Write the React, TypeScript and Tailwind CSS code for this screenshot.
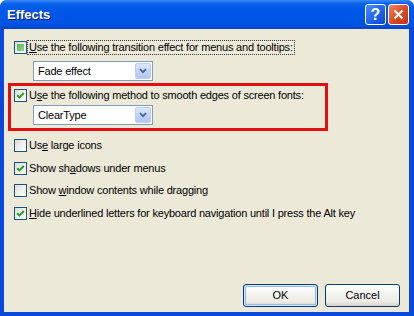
import React from 'react'

const font = { fontFamily: '"Liberation Sans", Arial, sans-serif' }

function CheckBox({ state }: { state: 'on' | 'off' | 'mixed' }) {
  return (
    <div className="relative h-[13px] w-[13px] shrink-0 border border-[#1C5180] bg-[linear-gradient(135deg,#DCDCD7_0%,#F4F4F0_60%,#FFFFFF_100%)]">
      {state === 'on' && (
        <svg viewBox="0 0 11 11" className="absolute left-0 top-0 h-[11px] w-[11px]">
          <path d="M2.2 5.2 L4.4 7.4 L8.8 3" fill="none" stroke="#21A121" strokeWidth="2" />
        </svg>
      )}
      {state === 'mixed' && (
        <div className="absolute left-[2px] top-[2px] h-[7px] w-[7px] bg-[linear-gradient(135deg,#5DB85A,#8ED38A)]" />
      )}
    </div>
  )
}

function Row({
  state,
  children,
  focus,
  className,
}: {
  state: 'on' | 'off' | 'mixed'
  children: React.ReactNode
  focus?: boolean
  className?: string
}) {
  return (
    <div className={'flex h-[13px] items-center ' + (className ?? '')}>
      <CheckBox state={state} />
      <span
        className={
          'ml-[1px] whitespace-nowrap px-[1px] text-[11px] leading-[13px] tracking-[-0.2px] text-black ' +
          (focus ? 'outline outline-1 outline-dotted outline-[#333]' : '')
        }
      >
        {children}
      </span>
    </div>
  )
}

function Combo({ value, className }: { value: string; className?: string }) {
  return (
    <div
      className={
        'flex h-[20px] w-[120px] items-center border border-[#7F9DB9] bg-white p-[1px] ' + (className ?? '')
      }
    >
      <span className="flex-1 pl-[3px] text-[11px] tracking-[-0.2px] text-black">{value}</span>
      <div className="flex h-full w-[16px] items-center justify-center rounded-[2px] border border-[#B9CEF9] bg-[linear-gradient(to_bottom,#DCE8FD,#C1D3FB_50%,#B2C6F4)]">
        <svg viewBox="0 0 8 6" className="h-[6px] w-[8px]">
          <path d="M1 1.2 L4 4.2 L7 1.2" fill="none" stroke="#4D6185" strokeWidth="1.8" />
        </svg>
      </div>
    </div>
  )
}

function XpButton({ label, isDefault }: { label: string; isDefault?: boolean }) {
  return (
    <div
      className={
        'flex h-[23px] w-[75px] items-center justify-center rounded-[3px] border border-[#003C74] bg-[linear-gradient(to_bottom,#FFFFFF_0%,#F3F3EF_40%,#ECEBE6_80%,#D6D0C5_100%)] text-[11px] text-black ' +
        (isDefault ? 'shadow-[inset_0_0_0_1px_#CEE7FF,inset_0_0_0_2px_#98B8EA]' : '')
      }
    >
      {label}
    </div>
  )
}

export default function App() {
  return (
    <div
      style={font}
      className="flex h-[316px] w-[414px] flex-col overflow-hidden rounded-t-[7px] bg-[#0A48DB]"
    >
      {/* title bar */}
      <div className="flex h-[29px] shrink-0 items-center bg-[linear-gradient(to_bottom,#3B8CF5_0%,#0A63EC_12%,#0058E8_30%,#0055E5_70%,#0050DE_90%,#0341C8_100%)] pl-[7px] pr-[5px]">
        <span className="flex-1 text-[13px] font-bold text-white [text-shadow:1px_1px_#0A1883]">Effects</span>
        <div className="flex h-[21px] w-[21px] items-center justify-center rounded-[3px] border border-white bg-[linear-gradient(135deg,#4D8CF7,#1E5FE6_60%,#1146C8)]">
          <span className="text-[16px] font-bold leading-none text-white">?</span>
        </div>
        <div className="ml-[2px] flex h-[21px] w-[21px] items-center justify-center rounded-[3px] border border-white bg-[linear-gradient(135deg,#E8856A,#D9481F_55%,#C03512)]">
          <svg viewBox="0 0 11 11" className="h-[11px] w-[11px]">
            <path d="M1.5 1.5 L9.5 9.5 M9.5 1.5 L1.5 9.5" stroke="white" strokeWidth="2" />
          </svg>
        </div>
      </div>

      {/* body */}
      <div className="mb-[4px] ml-[4px] mr-[5px] flex flex-1 flex-col bg-[#ECE9D8] pl-[4px]">
        <Row state="mixed" focus className="ml-[6px] mt-[12px]">
          <u>U</u>se the following transition effect for menus and tooltips:
        </Row>
        <Combo value="Fade effect" className="ml-[25px] mt-[7px]" />

        <div className="mt-[2px] w-[320px] border-[3px] border-[#E01010] px-[3px] pb-[3px] pt-[3px]">
          <Row state="on">
            U<u>s</u>e the following method to smooth edges of screen fonts:
          </Row>
          <Combo value="ClearType" className="ml-[19px] mt-[3px]" />
        </div>

        <Row state="off" className="ml-[6px] mt-[8px]">
          Us<u>e</u> large icons
        </Row>
        <Row state="on" className="ml-[6px] mt-[10px]">
          Show sh<u>a</u>dows under menus
        </Row>
        <Row state="off" className="ml-[6px] mt-[9px]">
          Show <u>w</u>indow contents while dragging
        </Row>
        <Row state="on" className="ml-[6px] mt-[10px]">
          <u>H</u>ide underlined letters for keyboard navigation until I press the Alt key
        </Row>

        <div className="flex-1" />
        <div className="flex justify-end gap-[7px] pb-[5px] pr-[9px]">
          <XpButton label="OK" isDefault />
          <XpButton label="Cancel" />
        </div>
      </div>
    </div>
  )
}
